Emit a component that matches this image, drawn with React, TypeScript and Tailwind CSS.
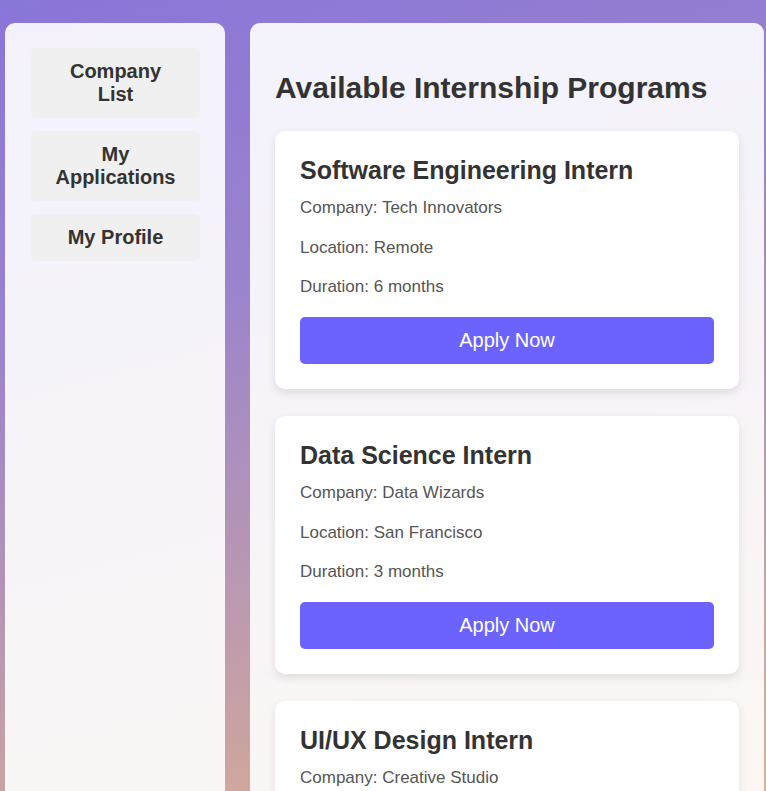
import React from 'react';

type Program = {
  title: string;
  company: string;
  location: string;
  duration: string;
};

const programs: Program[] = [
  { title: 'Software Engineering Intern', company: 'Tech Innovators', location: 'Remote', duration: '6 months' },
  { title: 'Data Science Intern', company: 'Data Wizards', location: 'San Francisco', duration: '3 months' },
  { title: 'UI/UX Design Intern', company: 'Creative Studio', location: 'New York', duration: '4 months' },
];

const navItems = ['Company List', 'My Applications', 'My Profile'];

const App: React.FC = () => {
  return (
    <div className="h-[791px] overflow-hidden bg-[linear-gradient(165deg,#8a75d9_0%,#9a84cc_35%,#c49fa8_75%,#ddb28c_100%)] font-['Liberation_Sans',Arial,sans-serif]">
      <div className="flex gap-[25px] pl-[5px] pr-[2px] pt-[23px]">
        <aside className="w-[220px] shrink-0 h-[780px] bg-white/90 rounded-t-[10px] px-[26px] pt-[25px] flex flex-col gap-[13px]">
          {navItems.map((item) => (
            <button
              key={item}
              className="w-[169px] bg-[#f0f0f0] rounded-[5px] py-[12px] px-[20px] text-[20px] leading-[23px] font-bold text-[#333] text-center"
            >
              {item}
            </button>
          ))}
        </aside>

        <main className="flex-1 h-[780px] overflow-hidden bg-white/90 rounded-t-[10px] px-[25px] pt-[25px]">
          <h2 className="mt-[22px] mb-[26px] text-[30px] leading-[35px] font-bold text-[#333]">
            Available Internship Programs
          </h2>

          <div className="flex flex-col gap-[27px]">
            {programs.map((p) => (
              <div key={p.title} className="bg-white rounded-[10px] shadow-[0_4px_10px_rgba(0,0,0,0.1)] p-[25px]">
                <h3 className="text-[25px] leading-[29px] font-bold text-[#333]">{p.title}</h3>
                <div className="mt-[13px] flex flex-col gap-[19.5px] text-[17px] leading-[20px] text-[#555]">
                  <p>Company: {p.company}</p>
                  <p>Location: {p.location}</p>
                  <p>Duration: {p.duration}</p>
                </div>
                <button className="mt-[20px] w-full bg-[#6c63ff] text-white rounded-[5px] py-[12px] text-[20px] leading-[23px]">
                  Apply Now
                </button>
              </div>
            ))}
          </div>
        </main>
      </div>
    </div>
  );
};

export default App;
